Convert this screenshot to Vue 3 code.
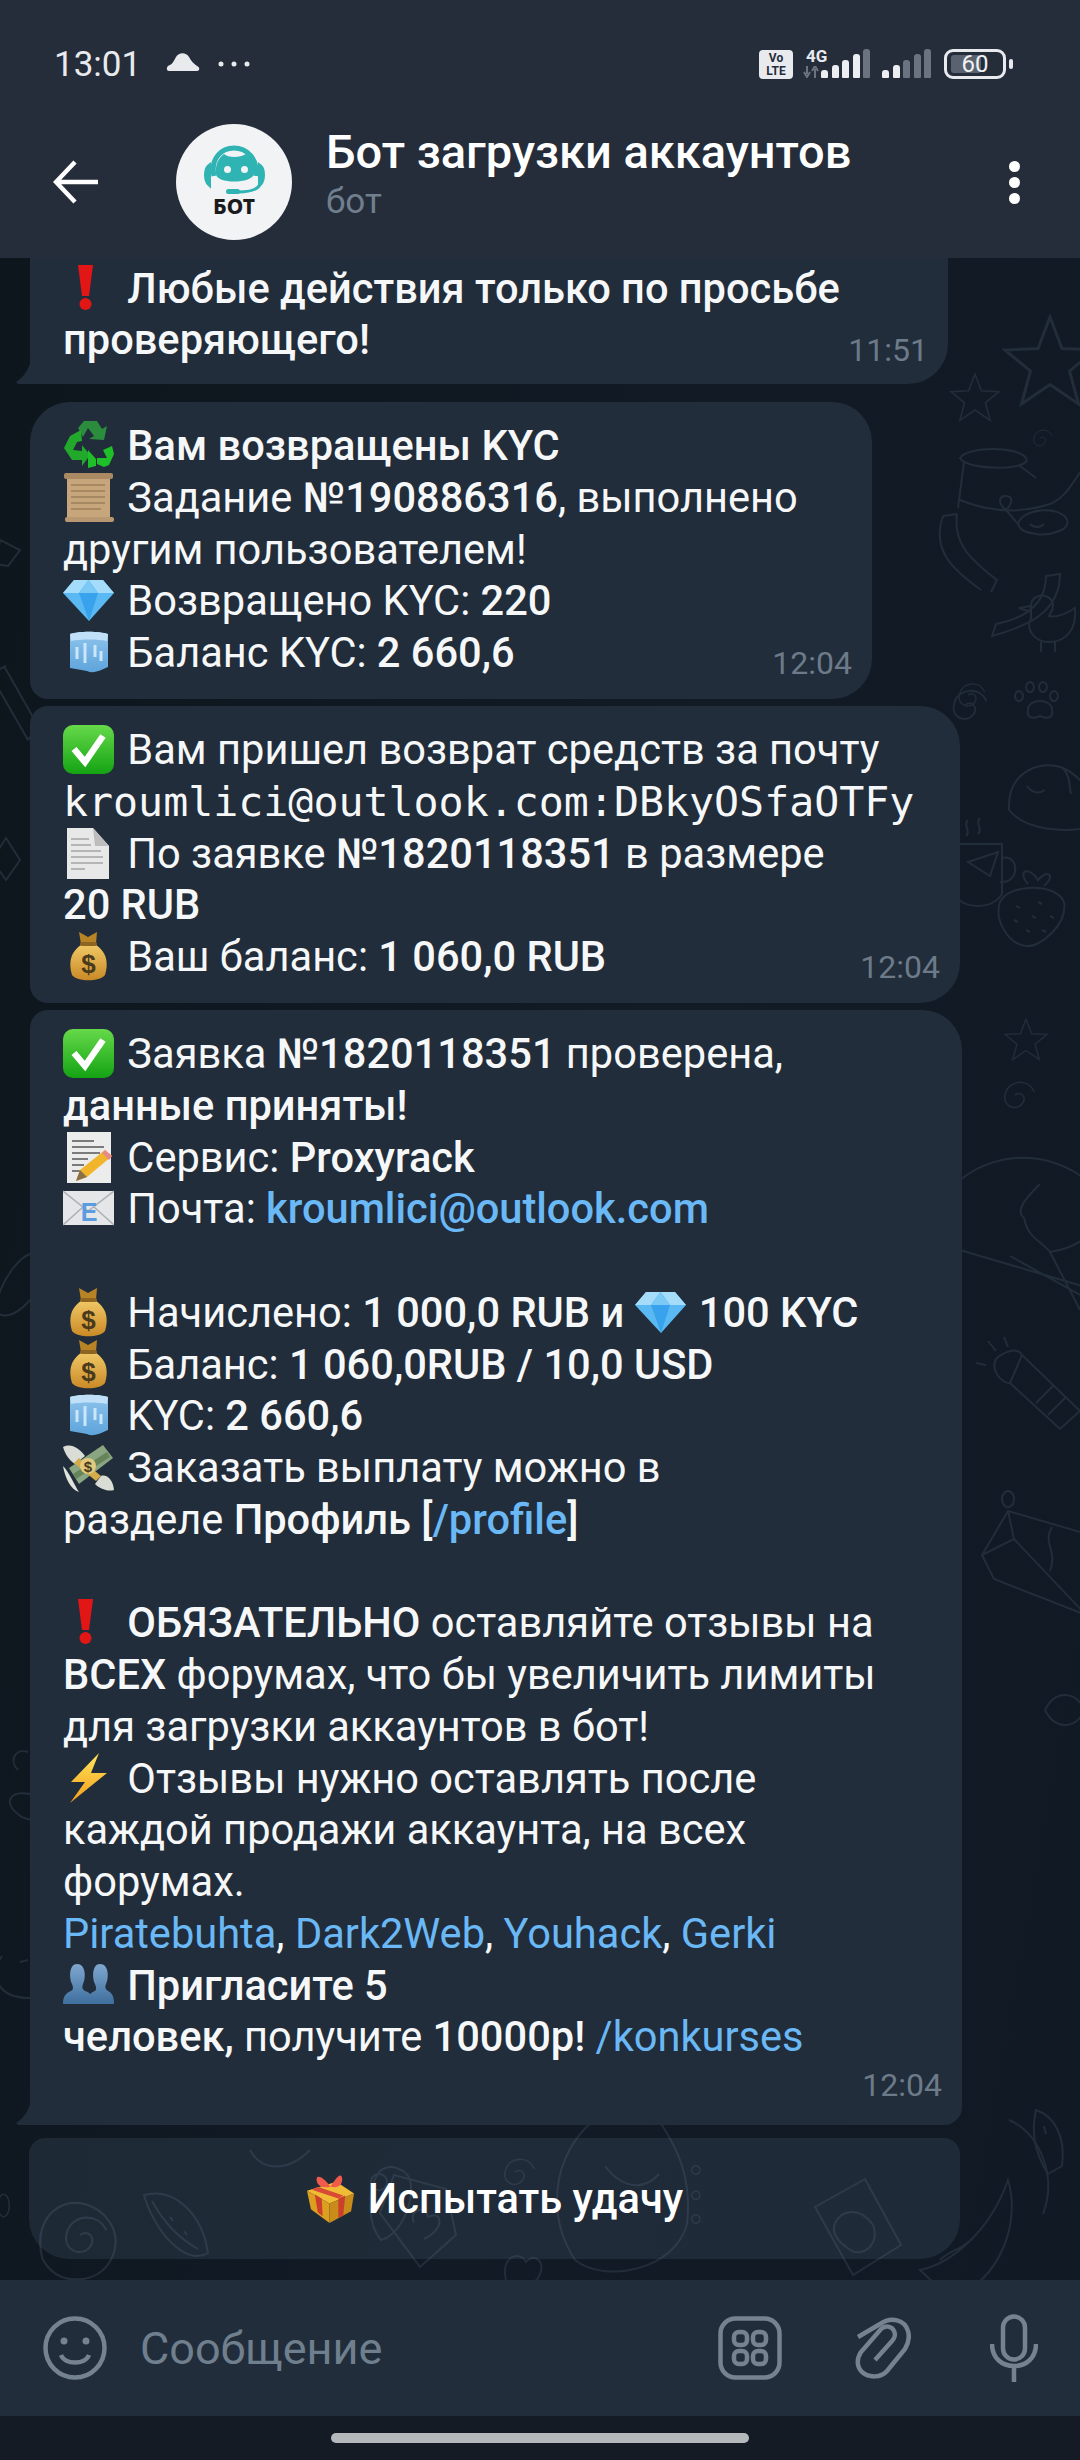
<script setup>
const doodles = [
  // star, small star
  { x: 1050, y: 362, s: 1.5, d: 'M0-30 8-9 30-8 13 6 19 28 0 15-19 28-13 6-30-8-8-9Z' },
  { x: 975, y: 398, s: .8, d: 'M0-30 8-9 30-8 13 6 19 28 0 15-19 28-13 6-30-8-8-9Z' },
  { x: 1026, y: 1040, s: .7, d: 'M0-30 8-9 30-8 13 6 19 28 0 15-19 28-13 6-30-8-8-9Z' },
  // swirls
  { x: 1040, y: 438, s: .5, d: 'M0 0c8-6 16 4 8 12s-24 2-20-14 28-20 36-2' },
  { x: 1015, y: 1095, s: .8, d: 'M0 0c8-6 16 4 8 12s-24 2-20-14 28-20 36-2' },
  { x: 968, y: 695, s: .7, d: 'M0 0c8-6 16 4 8 12s-24 2-20-14 28-20 36-2' },
  { x: 965, y: 705, s: .9, d: 'M0 0c8-6 16 4 8 12s-24 2-20-14 28-20 36-2' },
  { x: 80, y: 2235, s: 1.1, d: 'M0 0c8-6 16 4 8 12s-24 2-20-14 28-20 36-2M-34 22c-12-44 28-66 56-40 22 22 6 56-20 58-16 2-28-4-36-18Z' },
  { x: 515, y: 2172, s: .8, d: 'M0 0c8-6 16 4 8 12s-24 2-20-14 28-20 36-2' },
  // jar
  { x: 990, y: 470, s: 1, d: 'M-30-12C-22-24 28-24 36-12S-22 2-30-12ZM-26-8-32 38M30-4 46 8M-30 30C0 42 30 44 60 34M60 34C76 28 84 10 96-6' },
  // crab
  { x: 1040, y: 520, s: 1, d: 'M-22 4C-18-12 18-14 26-2S8 16-4 14-20 10-22 4ZM-22 4-34-10M-34-10C-42-16-42-24-34-24S-28-16-34-10M-10 4c4 4 10 4 14 0' },
  // noodles
  { x: 945, y: 540, s: 1, d: 'M-2-24C-14 10 8 30 36 50M12-26C8 4 26 20 52 40L46 52M-2-24 12-26' },
  { x: 1000, y: 600, s: 1, d: 'M60-26C60 12 28 26-8 36L-4 24C26 18 46 4 46-24ZM46-24 60-26' },
  // duck
  { x: 1045, y: 622, s: 1, d: 'M-14-16C-14-30 8-30 8-16 8-10 4-8 4-6 14-4 24-10 30-14 32 6 22 20 4 20-10 20-20 8-14-4-14-8-14-12-14-16ZM-14-16-26-14-14-10M-4 20V30M10 20V30' },
  // paw
  { x: 1040, y: 702, s: 1, d: 'M-12 8C-12-4 12-4 12 8 14 18 4 16 0 14-4 16-14 18-12 8ZM-17-6A4 5 0 1 0-17-5.900M-6-15A4 5 0 1 0-6-14.900M7-15A4 5 0 1 0 7-14.900M18-6A4 5 0 1 0 18-5.900' },
  // sushi leaf
  { x: 1045, y: 790, s: 1, d: 'M-36 20C-38-22 0-30 18-22S52 6 50 36C20 44-20 40-36 20ZM-18-4C-12 4-6 4 0 0M18-22C26-12 24-4 26 4' },
  // cup
  { x: 980, y: 870, s: 1, d: 'M-26-26-26 24C-16 40 12 40 22 24L22-26ZM22-12C40-16 40 14 20 12M-12-8 18-18 10 6ZM-12-50c-6 6 4 10-2 16M0-52c-6 6 4 10-2 16' },
  // strawberry
  { x: 1030, y: 910, s: 1, d: 'M-30-8C-22-26 26-28 34-8 38 14 10 38-4 36-22 34-36 10-30-8ZM-2-26C-14-40 0-44 8-30 18-42 26-34 14-24M-14-4l4 2M8-8l4 2M-16 10l4 2M2 6l4 2M20 6l4 2M-4 20l4 2M12 20l4 2' },
  // balloon
  { x: 1010, y: 1180, s: 1, d: 'M-50 0A100 100 0 0 1 90 14C96 40 80 66 40 72 30 60 18 58 14 38 4 30 18 16 30 4M96 40 70 130M-50 70 72 106M40 72 70 130M0 76 72 116' },
  // flashlight
  { x: 1030, y: 1385, s: 1, d: 'M-34-26C-26-34-12-38-8-30L-20-2C-28-2-40-14-34-26ZM-8-30 50 26 30 44-20-2M24 0 6 18M36 12 18 30M-26-48-22-38M-54-22-44-20M-42-44-34-34' },
  // bottle/map
  { x: 1040, y: 1545, s: 1, d: 'M-58 10-32-34 64-6 46 70-46 34ZM-32-34-26-6-58 10M-26-6 46 70M12-18C2-2 18 6 10 26M-26-46A6 8 0 1 0-26-45.800' },
  { x: 1065, y: 1710, s: 1, d: 'M-20 0C-10-20 10-20 20 0M-20 0C-10 20 10 20 20 0M20 0 36-10 36 10Z' },
  // left margin
  { x: 10, y: 700, s: 1, d: 'M-20-26 18 40M-6-34 28 26M-20-26-4-34M18 40 28 26' },
  { x: 8, y: 560, s: 1, d: 'M-8-20 12-10 0 6-12 4Z' },
  { x: 6, y: 860, s: 1, d: 'M0-22 14 0 0 20-14 0Z' },
  { x: 8, y: 1290, s: 1, d: 'M-14 20C-4-20 16-34 22-36M-14 20C-6 30 8 26 22 10' },
  { x: 12, y: 1760, s: 1, d: 'M16-8C4-12-4 0 6 10M18 34C-4 30-8 44 6 54 12 60 20 60 24 58' },
  { x: 6, y: 1980, s: 1, d: 'M-4-24C-16-8-12 18 24 18M14-18 22-20' },
  // keyboard band
  { x: 170, y: 2225, s: 1, d: 'M-26-30C4-38 32-12 38 28 16 42-16 6-26-30ZM-18-24C-6-2 10 14 28 24M0-8l3 4M14 6l3 4' },
  { x: 280, y: 2150, s: 1, d: 'M-30 0C-18 22 8 22 30 0' },
  { x: 395, y: 2190, s: 1, d: 'M-16-18C-8-28 14-22 16-6 18 20 2 46-14 50-28 34-28 0-16-18ZM-8-8A8 8 0 1 0-8-7.800' },
  { x: 420, y: 2205, s: 1, d: 'M-40 8-26-30 26-16 36 30 0 62ZM-6 18C-12 4 6 0 8 12 22 4 26 24 4 34' },
  { x: 625, y: 2200, s: 1, d: 'M-68 0C-68-60-20-100 20-100 48-60 68-30 62 24 50 70-20 84-50 60-60 44-68 26-68 0ZM-20-34C-2-10 20-10 34-26' },
  { x: 520, y: 2260, s: 1, d: 'M-14 20C-20-4 0-10 6 2 14-8 28 2 18 18L2 36Z' },
  { x: 845, y: 2215, s: 1, d: 'M-30-8 20-36 56 30 8 60ZM-10 8C-4-4 14-10 28 10 36 30 16 44 4 34-8 26-14 18-10 8Z' },
  { x: 960, y: 2240, s: 1, d: 'M-40 30C-10 24 30-8 48-60 60-20 44 36-8 60ZM-20 20C-10 10 0 10 8 2' },
  { x: 1050, y: 2140, s: 1, d: 'M-14-30C4-24 16-4 12 26L-2 34C-18 8-18-12-14-30ZM-6-14-4-6' },
  { x: 700, y: 2170, s: .7, d: 'M0 0A6 6 0 1 0 0 .2M0 36A6 6 0 1 0 0 36.200M0 70A6 6 0 1 0 0 70.200' },
  { x: 14, y: 2215, s: .8, d: 'M-6-12A7 14 0 1 0-6-11.800' },
  { x: 1025, y: 2170, s: 1, d: 'M-16-50C16-36 32 8 18 44' },
]
</script>

<template>
  <div class="page">
    <svg class="sprite" width="0" height="0" aria-hidden="true">
      <defs>
        <linearGradient id="gGreen" x1="0" y1="0" x2="0" y2="1"><stop offset="0" stop-color="#66d94a" /><stop offset="1" stop-color="#14a314" /></linearGradient>
        <linearGradient id="gRec" x1="0" y1="0" x2="0" y2="1"><stop offset="0" stop-color="#2b8a3e" /><stop offset="1" stop-color="#25b92e" /></linearGradient>
        <linearGradient id="gBag" x1="0" y1="0" x2="0" y2="1"><stop offset="0" stop-color="#f0c765" /><stop offset="1" stop-color="#c98a26" /></linearGradient>
        <linearGradient id="gIce" x1="0" y1="0" x2="0" y2="1"><stop offset="0" stop-color="#8fc4ec" /><stop offset="1" stop-color="#5ea4dc" /></linearGradient>
        <linearGradient id="gPpl" x1="0" y1="0" x2="0" y2="1"><stop offset="0" stop-color="#7fa8cf" /><stop offset="1" stop-color="#3f6f9e" /></linearGradient>
        <linearGradient id="gBolt" x1="0" y1="0" x2="0" y2="1"><stop offset="0" stop-color="#ffe65c" /><stop offset="1" stop-color="#f59c1a" /></linearGradient>

        <symbol id="e-check" viewBox="0 0 51 51">
          <rect x="0" y="1" width="51" height="49" rx="10" fill="url(#gGreen)" />
          <path d="M11 25l11 13L40 12" fill="none" stroke="#fff" stroke-width="6.500" stroke-linejoin="miter" />
        </symbol>
        <symbol id="e-recycle" viewBox="0 0 51 51">
          <path d="M15 8 21 1h13l5 8 5-3-3 14-15-1 5-3-6-8-5 9Z" fill="#2a8c3c" />
          <path d="M1 28l6-12 11-6 1 11-5 1-4 8 9 1v-6l8 10-8 11v-6L9 40Z" fill="#22a92c" />
          <path d="M34 44v-6h10l-4-8 9-4 2 8-5 11-5 2Z M33 39 25 30v18l8-2Z" fill="#1fbf2a" />
        </symbol>
        <symbol id="e-scroll" viewBox="0 0 51 51">
          <rect x="4" y="3" width="43" height="44" fill="#c7a67c" />
          <rect x="1" y="1" width="49" height="6" rx="2" fill="#a98a63" />
          <rect x="2" y="45" width="49" height="5" rx="2" fill="#b89871" />
          <path d="M8 13h34M8 19h34M8 25h34M8 31h34M8 37h30" stroke="#9c8059" stroke-width="1.500" />
        </symbol>
        <symbol id="e-gem" viewBox="0 0 51 51">
          <path d="M11 5h29l11 13-25 28L0 18Z" fill="#5ab8f2" />
          <path d="M11 5h29l11 13H0Z" fill="#a5dcfa" />
          <path d="M16 18 25.500 5 35 18 26 46Z" fill="#38a3ec" />
          <path d="M16 18h19l-9.500-13Z" fill="#7cc9f6" />
        </symbol>
        <symbol id="e-ice" viewBox="0 0 51 51">
          <path d="M7 7C16 4 36 4 45 7V40C36 44 30 47 24 44L7 41Z" fill="url(#gIce)" />
          <path d="M7 7C16 4 36 4 45 7L44 14C34 12 18 12 8 14Z" fill="#bfe0f6" />
          <path d="M14 20V32M22 16V36M32 18V30M38 24V34" stroke="#c9e6fa" stroke-width="3" />
        </symbol>
        <symbol id="e-doc" viewBox="0 0 51 51">
          <path d="M4 0H30L46 18V51H4Z" fill="#e8e8e8" />
          <path d="M30 0 46 18H32Z" fill="#bdbdbd" />
          <path d="M8 11H26M8 17H28M8 23H38M8 29H40M8 35H40M8 41H22" stroke="#a4a4a4" stroke-width="1.500" />
        </symbol>
        <symbol id="e-bag" viewBox="0 0 51 51">
          <path d="M16 1 25 6 34 1 33 13H18Z" fill="#b88324" />
          <path d="M18 14C6 22 6 34 9 44 14 51 37 51 42 44 45 34 45 22 33 14Z" fill="url(#gBag)" />
          <rect x="17" y="11" width="17" height="4" rx="2" fill="#8d6420" />
          <text x="25.500" y="42" class="emo-text" font-size="26" fill="#4a3a1c" text-anchor="middle">$</text>
        </symbol>
        <symbol id="e-memo" viewBox="0 0 51 51">
          <rect x="4" y="0" width="44" height="51" fill="#ececec" />
          <path d="M9 9h22M9 15h32M9 21h28M9 27h16M9 33h12M9 39h10" stroke="#555" stroke-width="1.300" />
          <path d="M42 18 49 24 24 45 13 49 17 38Z" fill="#f1b52b" />
          <path d="M42 18 49 24 46 28 39 21Z" fill="#e88a85" />
          <path d="M17 38 13 49 24 45Z" fill="#8a7048" />
        </symbol>
        <symbol id="e-mail" viewBox="0 0 51 51">
          <rect x="0" y="8" width="51" height="34" fill="#e4e6e8" />
          <path d="M0 8 25 28 51 8M0 42 20 24M51 42 31 24" fill="none" stroke="#aab0b6" stroke-width="1.500" />
          <text x="26" y="38" class="emo-text" font-size="25" fill="#5b9be0" text-anchor="middle">E</text>
        </symbol>
        <symbol id="e-wings" viewBox="0 0 51 51">
          <path d="M0 5C8 1 16 6 22 14L12 22C6 18 2 12 0 5Z" fill="#d9ddd5" />
          <path d="M38 34C44 32 50 38 51 48 44 50 36 46 32 42Z" fill="#d9ddd5" />
          <path d="M6 26 40 3 50 16 16 42Z" fill="#8aa581" />
          <path d="M10 32 44 10 47 15 13 37Z" fill="#66845c" />
          <path d="M16 16 38 34 33 39 11 21Z" fill="#d4ab4b" />
          <path d="M0 24C6 30 12 44 16 50 8 48 2 36 0 24Z" fill="#e0e2dc" />
          <circle cx="25" cy="24" r="8" fill="#e3c97d" />
          <text x="25" y="30" class="emo-text" font-size="15" fill="#4a3a1c" text-anchor="middle">$</text>
        </symbol>
        <symbol id="e-excl" viewBox="0 0 51 51">
          <path d="M15 2H30L26 33H19Z" fill="#e31616" />
          <circle cx="22.500" cy="41" r="6" fill="#e31616" />
        </symbol>
        <symbol id="e-bolt" viewBox="0 0 51 51">
          <path d="M36 0 8 29 22 29 7 50 44 20 28 20Z" fill="url(#gBolt)" />
        </symbol>
        <symbol id="e-people" viewBox="0 0 51 51">
          <path d="M14 4C23 4 23 18 20 24 19 27 19 29 22 31 28 33 30 36 30 44H0C0 36 3 33 8 31 11 29 10 27 9 24 6 18 6 4 14 4Z" fill="url(#gPpl)" />
          <path d="M37 4C46 4 46 18 43 24 42 27 42 29 45 31 49 33 51 36 51 44H24C24 36 27 33 32 31 34 29 33 27 32 24 29 18 29 4 37 4Z" fill="url(#gPpl)" />
        </symbol>
        <symbol id="e-gift" viewBox="0 0 51 51">
          <path d="M1 17 31 8 49 20 24 30Z" fill="#f0bb35" />
          <path d="M1 17 24 30 24 50 5 36Z" fill="#dd9f1f" />
          <path d="M24 30 49 20 46 38 24 50Z" fill="#c98b1a" />
          <path d="M9 21 16 25 17 43 12 39ZM33 25 40 22 38 42 33 45Z" fill="#cd3f2c" />
          <path d="M12 13 38 22 33 25 6 16Z" fill="#d84a35" />
          <path d="M25 13C18 3 12 1 11 4S12 16 25 13C38 16 38 4 36 2S30 5 25 13Z" fill="#ef5a4b" />
        </symbol>
      </defs>
    </svg>

    <header class="top">
      <div class="status">
        <div class="status-left">
          <span class="clock">13:01</span>
          <svg class="cloud" viewBox="0 0 34 20"><path d="M3 19C0 19 0 14 4 13 6 12 8 9 10 5 13 0 20 0 23 5 25 9 28 12 31 14 34 15 34 19 31 19Z" fill="#e8eaee" /></svg>
          <svg class="dots3" viewBox="0 0 32 6"><circle cx="3" cy="3" r="2.500" /><circle cx="16" cy="3" r="2.500" /><circle cx="29" cy="3" r="2.500" /></svg>
        </div>
        <div class="status-right">
          <div class="volte"><span>Vo</span><span>LTE</span></div>
          <div class="net">
            <span class="net-label">4G</span>
            <svg class="net-arrows" viewBox="0 0 16 12"><path d="M4 0V8M1 6 4 11 7 6" fill="none" stroke="#6b7380" stroke-width="2" /><path d="M12 12V3M9 5 12 0 15 5" fill="none" stroke="#6b7380" stroke-width="2" /></svg>
          </div>
          <div class="bars">
            <i style="height: 8px" /><i style="height: 13px" /><i style="height: 18px" /><i style="height: 24px" /><i class="off" style="height: 29px" />
          </div>
          <div class="bars second">
            <i style="height: 8px" /><i style="height: 13px" /><i class="off" style="height: 18px" /><i class="off" style="height: 24px" /><i class="off" style="height: 29px" />
          </div>
          <div class="battery">
            <div class="battery-fill"></div>
            <span>60</span>
          </div>
          <div class="battery-tip"></div>
        </div>
      </div>

      <div class="toolbar">
        <svg class="back" viewBox="0 0 46 44"><path d="M45 22H3M22 2 3 22 22 42" fill="none" stroke="#fff" stroke-width="4.500" /></svg>
        <div class="avatar">
          <svg viewBox="0 0 116 116" width="116" height="116">
            <path d="M38 52C34 34 46 24 58 24S82 34 80 52" fill="none" stroke="#2fb3b3" stroke-width="5" />
            <path d="M33 42C29 45 29 56 33 60ZM84 42C88 45 88 56 84 60Z" fill="#2fb3b3" stroke="#2fb3b3" stroke-width="4" />
            <path d="M48 30C52 34 64 34 70 30 76 34 79 42 78 50 76 60 40 60 40 50 39 42 42 34 48 30Z" fill="#2fb3b3" />
            <rect x="48" y="42" width="7" height="7" rx="3.500" fill="#f2f3f5" />
            <rect x="65" y="42" width="7" height="7" rx="3.500" fill="#f2f3f5" />
            <path d="M84 60C82 66 74 68 62 68" fill="none" stroke="#2fb3b3" stroke-width="3" />
            <rect x="50" y="65" width="14" height="5" rx="2.500" fill="#2fb3b3" />
            <text x="58" y="90" class="avatar-label" text-anchor="middle">БОТ</text>
          </svg>
        </div>
        <div class="title-box">
          <div class="title">Бот загрузки аккаунтов</div>
          <div class="subtitle">бот</div>
        </div>
        <div class="kebab"><i /><i /><i /></div>
      </div>
    </header>

    <main class="chat">
      <svg class="doodles" viewBox="0 258 1080 2022" width="1080" height="2022">
        <g v-for="(item, i) in doodles" :key="i" :transform="`translate(${item.x} ${item.y}) scale(${item.s})`">
          <path :d="item.d" />
        </g>
      </svg>

      <div class="bubble b1 tail">
        <div class="line"></div>
        <div class="line"><svg class="emo"><use href="#e-excl" /></svg> <b>Любые действия только по просьбе</b></div>
        <div class="row">
          <div class="line"><b>проверяющего!</b></div>
          <span class="time">11:51</span>
        </div>
      </div>

      <div class="bubble b2">
        <div class="line"><svg class="emo"><use href="#e-recycle" /></svg> <b>Вам возвращены KYC</b></div>
        <div class="line"><svg class="emo"><use href="#e-scroll" /></svg> Задание <b>№190886316</b>, выполнено</div>
        <div class="line">другим пользователем!</div>
        <div class="line"><svg class="emo"><use href="#e-gem" /></svg> Возвращено KYC: <b>220</b></div>
        <div class="row">
          <div class="line"><svg class="emo"><use href="#e-ice" /></svg> Баланс KYC: <b>2 660,6</b></div>
          <span class="time">12:04</span>
        </div>
      </div>

      <div class="bubble b3">
        <div class="line"><svg class="emo"><use href="#e-check" /></svg> Вам пришел возврат средств за почту</div>
        <div class="line mono">kroumlici@outlook.com:DBkyOSfaOTFy</div>
        <div class="line"><svg class="emo"><use href="#e-doc" /></svg> По заявке <b>№1820118351</b> в размере</div>
        <div class="line"><b>20 RUB</b></div>
        <div class="row">
          <div class="line"><svg class="emo"><use href="#e-bag" /></svg> Ваш баланс: <b>1 060,0 RUB</b></div>
          <span class="time">12:04</span>
        </div>
      </div>

      <div class="bubble b4 tail">
        <div class="line"><svg class="emo"><use href="#e-check" /></svg> Заявка <b>№1820118351</b> проверена,</div>
        <div class="line"><b>данные приняты!</b></div>
        <div class="line"><svg class="emo"><use href="#e-memo" /></svg> Сервис: <b>Proxyrack</b></div>
        <div class="line"><svg class="emo"><use href="#e-mail" /></svg> Почта: <b class="link">kroumlici@outlook.com</b></div>
        <div class="line"></div>
        <div class="line"><svg class="emo"><use href="#e-bag" /></svg> Начислено: <b>1 000,0 RUB и </b><svg class="emo"><use href="#e-gem" /></svg><b> 100 KYC</b></div>
        <div class="line"><svg class="emo"><use href="#e-bag" /></svg> Баланс: <b>1 060,0RUB  / 10,0 USD</b></div>
        <div class="line"><svg class="emo"><use href="#e-ice" /></svg> KYC: <b>2 660,6</b></div>
        <div class="line"><svg class="emo"><use href="#e-wings" /></svg> Заказать выплату можно в</div>
        <div class="line">разделе <b>Профиль [<span class="link">/profile</span>]</b></div>
        <div class="line"></div>
        <div class="line"><svg class="emo"><use href="#e-excl" /></svg> <b>ОБЯЗАТЕЛЬНО</b> оставляйте отзывы на</div>
        <div class="line"><b>ВСЕХ</b> форумах, что бы увеличить лимиты</div>
        <div class="line">для загрузки аккаунтов в бот!</div>
        <div class="line"><svg class="emo"><use href="#e-bolt" /></svg> Отзывы нужно оставлять после</div>
        <div class="line">каждой продажи аккаунта, на всех</div>
        <div class="line">форумах.</div>
        <div class="line"><span class="link">Piratebuhta</span>, <span class="link">Dark2Web</span>, <span class="link">Youhack</span>, <span class="link">Gerki</span></div>
        <div class="line"><svg class="emo"><use href="#e-people" /></svg> <b>Пригласите 5</b></div>
        <div class="line"><b>человек,</b> получите <b>10000р!</b> <span class="link">/konkurses</span></div>
        <div class="row end"><span class="time">12:04</span></div>
      </div>

      <button class="kb-btn">
        <svg class="emo gift"><use href="#e-gift" /></svg>
        <span>Испытать удачу</span>
      </button>
    </main>

    <footer class="composer">
      <svg class="ico smile" viewBox="0 0 64 64">
        <circle cx="32" cy="32" r="29.500" />
        <circle class="solid" cx="21" cy="25" r="3.500" />
        <circle class="solid" cx="43" cy="25" r="3.500" />
        <path d="M18 39C22 49 42 49 46 39" />
      </svg>
      <span class="placeholder">Сообщение</span>
      <svg class="ico grid" viewBox="0 0 64 64">
        <rect x="2.500" y="2.500" width="59" height="59" rx="15" />
        <rect x="16" y="16" width="13" height="13" rx="5" />
        <rect x="35" y="16" width="13" height="13" rx="5" />
        <rect x="16" y="35" width="13" height="13" rx="5" />
        <rect x="35" y="35" width="13" height="13" rx="5" />
      </svg>
      <svg class="ico clip" viewBox="0 0 56 64">
        <path d="M3 21 25 8C36 0 50 4 53 15 55 22 53 28 50 33L32 55C26 62 14 62 7 56 1 50 2 42 6 36L26 13C30 9 37 10 39 15 41 19 39 23 37 25L20 44" />
      </svg>
      <svg class="ico mic" viewBox="0 0 48 68">
        <rect x="13" y="2.500" width="22" height="43" rx="11" />
        <path d="M2 30C2 44 12 52 24 52S46 44 46 30M24 52V68" />
      </svg>
    </footer>

    <div class="nav"><div class="handle"></div></div>
  </div>
</template>

<style scoped>
.page {
  width: 1080px;
  height: 2460px;
  display: flex;
  flex-direction: column;
  overflow: hidden;
  font-family: Roboto, "Noto Sans", sans-serif;
  color: #f6f7f8;
  background: #141b24;
}
.sprite {
  position: absolute;
}
.top {
  height: 258px;
  flex: none;
  background: #252d3a;
}
.status {
  height: 124px;
  padding: 4px 67px 0 54px;
  box-sizing: border-box;
  display: flex;
  justify-content: space-between;
  align-items: center;
}
.status-left {
  display: flex;
  align-items: center;
}
.clock {
  font-size: 35px;
  color: #e8eaee;
}
.cloud {
  width: 34px;
  height: 20px;
  margin-left: 25px;
  margin-top: -4px;
}
.dots3 {
  width: 32px;
  height: 6px;
  margin-left: 18px;
  fill: #e8eaee;
}
.status-right {
  display: flex;
  align-items: flex-end;
  height: 30px;
}
.volte {
  width: 34px;
  height: 29px;
  border-radius: 4px;
  background: #e8eaee;
  color: #252d3a;
  font-size: 12px;
  line-height: 13px;
  font-weight: 700;
  display: flex;
  flex-direction: column;
  align-items: center;
  justify-content: center;
}
.net {
  width: 18px;
  height: 30px;
  margin-left: 10px;
  position: relative;
}
.net-label {
  position: absolute;
  left: 3px;
  top: -3px;
  font-size: 17px;
  font-weight: 700;
  color: #e8eaee;
}
.net-arrows {
  position: absolute;
  left: 0;
  bottom: 1px;
  width: 16px;
  height: 12px;
}
.bars {
  display: flex;
  align-items: flex-end;
  gap: 3.500px;
  margin-bottom: 1px;
}
.bars i {
  width: 7px;
  border-radius: 3px 3px 1px 1px;
  background: #eceef1;
}
.bars i.off {
  background: #6b7380;
}
.bars.second {
  margin-left: 12px;
}
.battery {
  width: 62px;
  height: 30px;
  margin-left: 13px;
  border: 3px solid #e8eaee;
  border-radius: 9px;
  box-sizing: border-box;
  position: relative;
  display: flex;
  align-items: center;
  justify-content: center;
}
.battery-fill {
  position: absolute;
  left: 4px;
  top: 3px;
  bottom: 3px;
  width: 30px;
  border-radius: 3px;
  background: #5a6270;
}
.battery span {
  position: relative;
  font-size: 24px;
  color: #f0f1f3;
}
.battery-tip {
  width: 4px;
  height: 10px;
  margin: 0 0 10px 3px;
  border-radius: 2px;
  background: #e8eaee;
}
.toolbar {
  height: 116px;
  display: flex;
  align-items: center;
  position: relative;
}
.back {
  width: 46px;
  height: 44px;
  margin-left: 53px;
  flex: none;
}
.avatar {
  width: 116px;
  height: 116px;
  margin-left: 77px;
  border-radius: 50%;
  background: #f2f3f5;
  flex: none;
}
.avatar-label {
  font-family: "Noto Sans", Roboto, sans-serif;
  font-size: 21px;
  font-weight: 800;
  fill: #1b1b1d;
}
.title-box {
  margin-left: 34px;
  flex: 1;
  align-self: flex-start;
}
.title {
  font-size: 47px;
  font-weight: 500;
  line-height: 56px;
  color: #fff;
  white-space: nowrap;
}
.subtitle {
  font-size: 35px;
  line-height: 44px;
  color: #707f8e;
}
.kebab {
  display: flex;
  flex-direction: column;
  gap: 5px;
  margin-right: 60px;
}
.kebab i {
  width: 11px;
  height: 11px;
  border-radius: 50%;
  background: #fff;
}
.chat {
  flex: 1;
  min-height: 0;
  overflow: hidden;
  position: relative;
  display: flex;
  flex-direction: column;
  justify-content: flex-end;
  align-items: flex-start;
  padding-bottom: 21px;
  background: linear-gradient(100deg, #0d161c 0%, #121a26 55%, #111925 100%);
}
.doodles {
  position: absolute;
  left: 0;
  bottom: 0;
  fill: none;
  stroke: #222d3a;
  stroke-width: 2;
}
.bubble {
  position: relative;
  flex: none;
  margin-left: 30px;
  padding: 18px 20px 0 33px;
  box-sizing: border-box;
  background: #212d3a;
  border-radius: 18px 40px 40px 18px;
}
.b1 {
  width: 918px;
  padding-bottom: 18px;
  margin-bottom: 18px;
}
.b2 {
  width: 842px;
  height: 297px;
  margin-bottom: 7px;
  border-radius: 40px 40px 40px 18px;
}
.b3 {
  width: 930px;
  height: 297px;
  margin-bottom: 7px;
}
.b4 {
  width: 932px;
  height: 1115px;
  margin-bottom: 13px;
  border-radius: 18px 40px 18px 18px;
}
.tail {
  border-bottom-left-radius: 0;
}
.tail::after {
  content: "";
  position: absolute;
  left: -14px;
  bottom: 0;
  width: 16px;
  height: 34px;
  background: #212d3a;
  clip-path: path("M16 0C16 14 10 26 0 32 L2 34 H16Z");
}
.line {
  height: 51.750px;
  line-height: 51.750px;
  font-size: 41.600px;
  white-space: pre;
}
.line b,
.link {
  font-weight: 500;
}
.link {
  color: #6ab8f5;
}
.line > span.link {
  font-weight: 400;
}
.mono {
  font-family: "DejaVu Sans Mono", monospace;
}
.row {
  display: flex;
  justify-content: space-between;
  align-items: flex-end;
}
.row.end {
  justify-content: flex-end;
}
.time {
  font-size: 32px;
  line-height: 44px;
  color: #6c7a89;
  margin-bottom: -6px;
}
.emo {
  width: 51px;
  height: 51px;
  vertical-align: -11px;
  margin-right: 3px;
  overflow: visible;
}
.emo-text {
  font-family: "Liberation Sans", sans-serif;
  font-weight: 700;
}
.kb-btn {
  flex: none;
  width: 931px;
  height: 121px;
  margin-left: 29px;
  border: 0;
  padding: 0;
  position: relative;
  border-radius: 16px 16px 40px 40px;
  background: rgba(120, 150, 180, 0.14);
  color: #fff;
  font-family: inherit;
  font-size: 41.600px;
  font-weight: 500;
  display: flex;
  align-items: center;
  justify-content: center;
  gap: 12px;
}
.gift {
  width: 50px;
  height: 50px;
  margin: 0;
}
.composer {
  height: 136px;
  flex: none;
  background: #212d3b;
  display: flex;
  align-items: center;
  padding-left: 43px;
}
.ico {
  fill: none;
  stroke: #75828f;
  stroke-width: 4.500;
  flex: none;
}
.ico .solid {
  fill: #75828f;
  stroke: none;
}
.smile {
  width: 64px;
  height: 64px;
}
.placeholder {
  width: 578px;
  margin-left: 33px;
  font-size: 45px;
  color: #6f7f8e;
}
.grid {
  width: 64px;
  height: 64px;
}
.clip {
  width: 56px;
  height: 64px;
  margin-left: 73px;
}
.mic {
  width: 48px;
  height: 68px;
  margin-left: 79px;
}
.nav {
  height: 44px;
  flex: none;
  background: #141b24;
  display: flex;
  justify-content: center;
  padding-top: 17px;
  box-sizing: border-box;
}
.handle {
  width: 418px;
  height: 10px;
  border-radius: 5px;
  background: #b5b9bc;
}
</style>
